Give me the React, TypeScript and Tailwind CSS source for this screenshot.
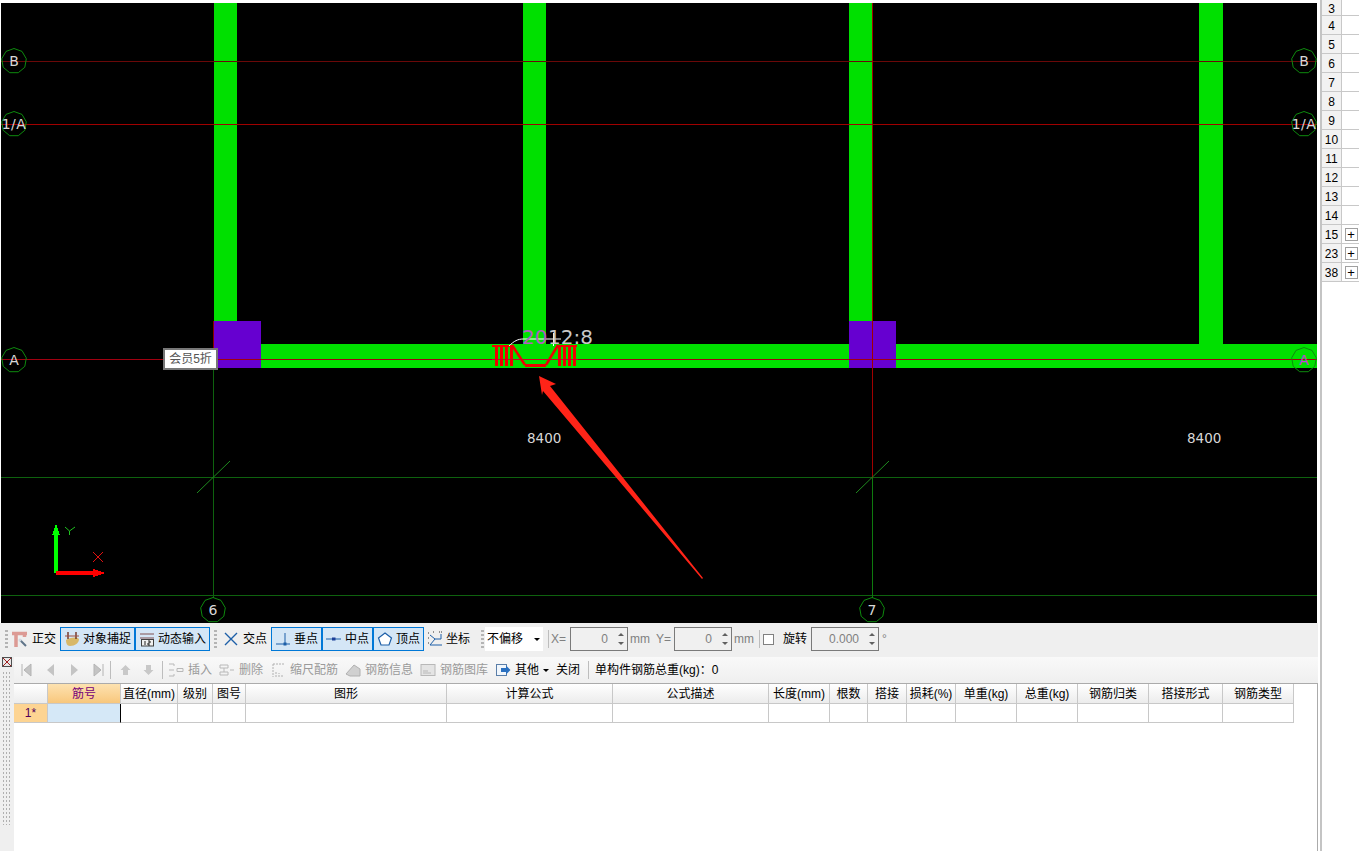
import React from 'react';

const font = '[font-family:"Liberation_Sans","Noto_Sans_CJK_SC",sans-serif]';

const columns = [
  { name: '筋号', w: 73 },
  { name: '直径(mm)', w: 57 },
  { name: '级别', w: 35 },
  { name: '图号', w: 33 },
  { name: '图形', w: 201 },
  { name: '计算公式', w: 166 },
  { name: '公式描述', w: 156 },
  { name: '长度(mm)', w: 61 },
  { name: '根数', w: 38 },
  { name: '搭接', w: 39 },
  { name: '损耗(%)', w: 49 },
  { name: '单重(kg)', w: 61 },
  { name: '总重(kg)', w: 61 },
  { name: '钢筋归类', w: 71 },
  { name: '搭接形式', w: 74 },
  { name: '钢筋类型', w: 71 },
];

const rowNumbers = ['3', '4', '5', '6', '7', '8', '9', '10', '11', '12', '13', '14', '15', '23', '38'];
const expandable = ['15', '23', '38'];

const axisMarks = [
  { x: 14, y: 61, t: 'B' },
  { x: 14, y: 124, t: '1/A' },
  { x: 14, y: 360, t: 'A' },
  { x: 1304, y: 61, t: 'B' },
  { x: 1304, y: 124, t: '1/A' },
  { x: 1304, y: 360, t: 'A', pink: true },
  { x: 213, y: 610, t: '6' },
  { x: 872, y: 610, t: '7' },
];

const octagon = (cx: number, cy: number, r: number) =>
  Array.from({ length: 9 }, (_, i) => {
    const a = (i * Math.PI * 2) / 9 - Math.PI / 2;
    return `${(cx + r * Math.cos(a)).toFixed(1)},${(cy + r * Math.sin(a)).toFixed(1)}`;
  }).join(' ');

const DrawingCanvas = () => (
  <svg viewBox="1 3 1316 620" className="block h-[620px] w-[1316px] bg-black" shapeRendering="crispEdges">
    {/* columns and beam */}
    <g fill="#00e000">
      <rect x="214" y="3" width="23" height="320" />
      <rect x="523" y="3" width="23" height="342" />
      <rect x="849" y="3" width="23" height="320" />
      <rect x="1199" y="3" width="24" height="342" />
      <rect x="261" y="344" width="1056" height="24" />
    </g>
    <rect x="213" y="321" width="48" height="47" fill="#6600d0" />
    <rect x="849" y="321" width="47" height="47" fill="#6600d0" />

    {/* axis lines */}
    <g strokeWidth="1">
      <line x1="0" y1="61.5" x2="1317" y2="61.5" stroke="#6a0808" />
      <line x1="0" y1="124.5" x2="1317" y2="124.5" stroke="#a00000" />
      <line x1="0" y1="359.5" x2="1317" y2="359.5" stroke="#a00010" />
      <line x1="0" y1="477.5" x2="1317" y2="477.5" stroke="#0e620e" />
      <line x1="0" y1="595.5" x2="1317" y2="595.5" stroke="#0e620e" />
      <line x1="213.5" y1="321" x2="213.5" y2="598" stroke="#0e620e" />
      <line x1="213.5" y1="321" x2="213.5" y2="368" stroke="#8a0000" />
      <line x1="872.5" y1="3" x2="872.5" y2="478" stroke="#a00000" />
      <line x1="872.5" y1="478" x2="872.5" y2="598" stroke="#0e7a0e" />
    </g>
    <g stroke="#1f8a1f" shapeRendering="auto">
      <line x1="197" y1="493" x2="230" y2="461" />
      <line x1="856" y1="493" x2="889" y2="461" />
    </g>

    {/* axis bubbles */}
    {axisMarks.map((m) => (
      <g key={`${m.x}-${m.y}`}>
        <polygon
          points={octagon(m.x, m.y, 12.5)}
          fill="none"
          stroke="#0e8a0e"
          shapeRendering="auto"
        />
        <text
          x={m.x}
          y={m.y + 5}
          textAnchor="middle"
          fontFamily="DejaVu Sans, sans-serif"
          fontSize="14"
          letterSpacing={m.t.length > 1 ? 0.5 : 0}
          fill={m.pink ? '#c83cdc' : '#d8d8d8'}
          shapeRendering="auto"
        >
          {m.t}
        </text>
      </g>
    ))}

    {/* rebar */}
    <g fill="#f00000">
      <rect x="492" y="345" width="20" height="2" />
      {[495, 500, 505, 510].map((x) => (
        <rect key={x} x={x} y="345" width="3" height="21" />
      ))}
      <rect x="525" y="364" width="21" height="3" />
      <rect x="557" y="345" width="20" height="2" />
      {[558, 563, 568, 573].map((x) => (
        <rect key={x} x={x} y="345" width="3" height="21" />
      ))}
    </g>
    <path d="M512 345 L525 365 M546 365 L558 345" stroke="#f00000" strokeWidth="2.5" fill="none" shapeRendering="auto" />
    <line x1="492" y1="359.5" x2="578" y2="359.5" stroke="#d00020" />
    <path d="M509 346 C514 341 518 339 523 339 L561 339" stroke="#fff" fill="none" shapeRendering="auto" />
    <path d="M553 333 V346" stroke="#fff" />
    <text x="522" y="344" fontFamily="DejaVu Sans, sans-serif" fontSize="20" fill="#b060c0" shapeRendering="auto">
      20
    </text>
    <text x="548" y="344" fontFamily="DejaVu Sans, sans-serif" fontSize="20" fill="#c8c8c8" shapeRendering="auto">
      12:8
    </text>

    {/* dimensions */}
    <g fontFamily="DejaVu Sans, sans-serif" fontSize="13.5" fill="#d8d8d8" shapeRendering="auto">
      <text x="527" y="443">8400</text>
      <text x="1187" y="443">8400</text>
    </g>

    {/* red arrow */}
    <polygon points="539,376 556,384 550,386 703,578 702,579 543,391 542,395" fill="#ff2418" shapeRendering="auto" />

    {/* ucs */}
    <rect x="54" y="534" width="4" height="39" fill="#00ff00" />
    <path d="M56 524 L60 535 H52 Z" fill="#00ff00" />
    <rect x="56" y="571" width="38" height="4" fill="#ff0000" />
    <path d="M105 573 L93 569 V577 Z" fill="#ff0000" />
    <path d="M65 527 L69.5 531 L75 527 M69.5 531 V535" stroke="#1fc01f" fill="none" shapeRendering="auto" />
    <path d="M93 552 L103 562 M103 552 L93 562" stroke="#e01010" fill="none" shapeRendering="auto" />
  </svg>
);

const Handle = () => <div className="h-[18px] w-[3px] bg-[repeating-linear-gradient(to_bottom,#b4b4b4_0,#b4b4b4_2px,transparent_2px,transparent_4px)]" />;
const Sep = () => <div className="h-[18px] w-px bg-[#bdbdbd]" />;

const SnapButton = ({ w, active, icon, label }: { w: number; active?: boolean; icon: React.ReactNode; label: string }) => (
  <div
    style={{ width: w }}
    className={`flex h-[24px] items-center justify-center gap-[3px] ${active ? 'border border-[#0078d7] bg-[#d4e6f6]' : ''}`}
  >
    {icon}
    <span>{label}</span>
  </div>
);

const Spinner = ({ value, w }: { value: string; w: number }) => (
  <div style={{ width: w }} className="flex h-[24px] items-center justify-end border border-[#7a7a7a] bg-[#f0f0f0] text-[#808080]">
    <span className="mr-[10px]">{value}</span>
    <div className="mr-[3px] flex flex-col gap-[6px]">
      <div className="h-0 w-0 border-x-[3px] border-b-[3px] border-x-transparent border-b-[#606060]" />
      <div className="h-0 w-0 border-x-[3px] border-t-[3px] border-x-transparent border-t-[#606060]" />
    </div>
  </div>
);

const Ico = ({ children, w = 16 }: { children: React.ReactNode; w?: number }) => (
  <svg width={w} height="16" viewBox={`0 0 ${w} 16`} fill="none" className="shrink-0">
    {children}
  </svg>
);

const SnapToolbar = () => (
  <div className="flex h-[34px] items-center bg-[#efefef] pb-[2px] pl-[5px] text-[12px] text-black">
    <Handle />
    <div className="ml-[4px] flex items-center gap-[4px]">
      <Ico>
        <path d="M0 2.5H15M4 2V16M12.5 2V6" stroke="#dc9a94" strokeWidth="3.5" />
        <path d="M8 9L14 15" stroke="#5f7488" strokeWidth="2" />
        <circle cx="8" cy="9" r="1.5" fill="#d0d8e0" />
      </Ico>
      <span>正交</span>
    </div>
    <div className="ml-[4px] flex">
      <SnapButton
        w={75}
        active
        label="对象捕捉"
        icon={
          <Ico>
            <path d="M2 9C5 7 12 5 15 8C15 12 11 15 6 15C3 15 2 12 2 9Z" fill="#d8b868" />
            <path d="M4 1V8M12 1V8" stroke="#703020" strokeWidth="1.4" />
            <path d="M1 5H15" stroke="#a05040" />
          </Ico>
        }
      />
      <SnapButton
        w={75}
        active
        label="动态输入"
        icon={
          <Ico>
            <path d="M1 3H15M1 7H15" stroke="#805050" />
            <rect x="2.5" y="8.5" width="12" height="6.5" fill="#f0f0f0" stroke="#404040" />
            <path d="M6 10V14M9 10H11V12H9V14H11" stroke="#202020" />
          </Ico>
        }
      />
    </div>
    <div className="ml-[4px]">
      <Handle />
    </div>
    <div className="ml-[6px] flex items-center gap-[4px]">
      <Ico>
        <path d="M2 2L14 14M14 2L2 14" stroke="#1d5fa8" strokeWidth="1.4" />
      </Ico>
      <span>交点</span>
    </div>
    <div className="ml-[4px] flex">
      <SnapButton
        w={51}
        active
        label="垂点"
        icon={
          <Ico>
            <path d="M10 2V13M1 13H15" stroke="#1d5fa8" />
            <rect x="8.5" y="11.5" width="3" height="3" fill="#1d5fa8" />
          </Ico>
        }
      />
      <SnapButton
        w={51}
        active
        label="中点"
        icon={
          <Ico>
            <path d="M0 8H15" stroke="#1d5fa8" />
            <rect x="6" y="6.5" width="3.5" height="3" fill="#1d3f98" />
          </Ico>
        }
      />
      <SnapButton
        w={51}
        active
        label="顶点"
        icon={
          <Ico>
            <path d="M8 2L14.5 7L12 14H4L1.5 7Z" stroke="#1d5fa8" strokeWidth="1.2" fill="#ffffff" />
          </Ico>
        }
      />
    </div>
    <div className="ml-[3px] flex items-center gap-[3px]">
      <Ico>
        <path d="M3 14H15M3 14L8 8L3 4M8 8L14 8L14 3" stroke="#1d5fa8" />
        <path d="M1 2H3M1 7H2M1 12H2M12 1H15M6 1H8" stroke="#303030" strokeDasharray="1 1" />
      </Ico>
      <span>坐标</span>
    </div>
    <div className="ml-[11px]">
      <Handle />
    </div>
    <div className="ml-[1px] flex h-[24px] w-[58px] items-center justify-between bg-white pl-[2px] pr-[3px]">
      <span>不偏移</span>
      <div className="h-0 w-0 border-x-[3px] border-t-[3px] border-x-transparent border-t-black" />
    </div>
    <div className="ml-[5px]">
      <Sep />
    </div>
    <span className="ml-[2px] w-[19px] text-[#808080]">X=</span>
    <Spinner value="0" w={58} />
    <span className="ml-[2px] w-[26px] text-[#808080]">mm</span>
    <span className="w-[18px] text-[#808080]">Y=</span>
    <Spinner value="0" w={58} />
    <span className="ml-[2px] w-[25px] text-[#808080]">mm</span>
    <Sep />
    <div className="ml-[3px] h-[11px] w-[11px] border border-[#808080] bg-white" />
    <span className="ml-[9px] w-[28px]">旋转</span>
    <Spinner value="0.000" w={68} />
    <span className="ml-[3px] text-[#808080]">°</span>
  </div>
);

const GridToolbar = () => (
  <div className="flex h-[26px] items-center bg-gradient-to-b from-[#f9f9f9] to-[#efefef] pl-[7px] text-[12px] text-[#9a9a9a]">
    <div className="flex w-[85px] items-center justify-between pr-[2px]">
      <Ico w={11}>
        <path d="M1 2V14M10 2L3 8L10 14Z" fill="#c4c4c4" stroke="#b4b4b4" />
      </Ico>
      <Ico w={9}>
        <path d="M8 2L1 8L8 14Z" fill="#c4c4c4" />
      </Ico>
      <Ico w={9}>
        <path d="M1 2L8 8L1 14Z" fill="#c4c4c4" />
      </Ico>
      <Ico w={11}>
        <path d="M10 2V14M1 2L8 8L1 14Z" fill="#c4c4c4" stroke="#b4b4b4" />
      </Ico>
    </div>
    <div className="ml-[4px]">
      <Sep />
    </div>
    <div className="ml-[9px] flex w-[42px] justify-between pr-[8px]">
      <Ico w={11}>
        <path d="M5.5 3L10.5 8H8V13H3V8H0.5Z" fill="#c8c8c8" />
      </Ico>
      <Ico w={11}>
        <path d="M5.5 13L10.5 8H8V3H3V8H0.5Z" fill="#c8c8c8" />
      </Ico>
    </div>
    <Sep />
    <div className="ml-[5px] flex items-center gap-[4px]">
      <Ico>
        <path d="M1 2H6V4M1 14H6V12M1 8H6M9 6.5H15V9.5H9Z" stroke="#b8b8b8" />
      </Ico>
      <span>插入</span>
    </div>
    <div className="ml-[7px] flex items-center gap-[4px]">
      <Ico>
        <path d="M1 3H9V6H1ZM1 10H9V13H1ZM5 6V10M11 8H15" stroke="#b8b8b8" />
      </Ico>
      <span>删除</span>
    </div>
    <div className="ml-[9px] flex items-center gap-[4px]">
      <Ico w={14}>
        <path d="M1 2H13M1 2V15M4 15V9M7 15V11M10 15V13" stroke="#b0b0b0" strokeDasharray="2 1" />
      </Ico>
      <span>缩尺配筋</span>
    </div>
    <div className="ml-[7px] flex items-center gap-[4px]">
      <Ico>
        <path d="M1 12L9 3L15 7V14H5Z" fill="#d0d0d0" stroke="#b0b0b0" />
      </Ico>
      <span>钢筋信息</span>
    </div>
    <div className="ml-[7px] flex items-center gap-[4px]">
      <Ico>
        <rect x="1" y="2.5" width="14" height="11" fill="#e4e4e4" stroke="#b8b8b8" />
        <path d="M3 9H8M3 11H11" stroke="#b8b8b8" />
      </Ico>
      <span>钢筋图库</span>
    </div>
    <div className="ml-[7px] flex items-center gap-[4px] text-black">
      <Ico>
        <rect x="1.5" y="2.5" width="10" height="11" fill="#f0f6fc" stroke="#5a7ea8" />
        <path d="M6 6H11V3.5L15.5 8L11 12.5V10H6Z" fill="#2a70c0" />
      </Ico>
      <span>其他</span>
      <div className="h-0 w-0 border-x-[3px] border-t-[3px] border-x-transparent border-t-black" />
    </div>
    <span className="ml-[7px] text-black">关闭</span>
    <div className="ml-[8px]">
      <Sep />
    </div>
    <span className="ml-[6px] text-black">单构件钢筋总重(kg)：0</span>
  </div>
);

const DataGrid = () => (
  <div className="h-[168px] border-r border-t border-[#ababab] bg-white text-[12px]">
    <div className="flex">
      <div className="h-[20px] w-[34px] border-b border-r border-[#c8c8c8] bg-gradient-to-b from-white to-[#ececec]" />
      {columns.map((c, i) => (
        <div
          key={c.name}
          style={{ width: c.w }}
          className={`flex h-[20px] items-center justify-center border-b border-r border-[#c8c8c8] ${
            i === 0 ? 'bg-gradient-to-b from-[#fde2b0] to-[#f8c77c] text-[#76007a]' : 'bg-gradient-to-b from-white to-[#ececec] text-black'
          }`}
        >
          {c.name}
        </div>
      ))}
    </div>
    <div className="flex">
      <div className="flex h-[19px] w-[34px] items-center justify-center border-b border-r border-[#c8c8c8] bg-[#fdd492] text-[#50005a]">
        1*
      </div>
      {columns.map((c, i) => (
        <div
          key={c.name}
          style={{ width: c.w }}
          className={`h-[19px] border-b border-[#c8c8c8] ${i === 0 ? 'border-r border-r-black bg-[#d5e8f7]' : 'border-r'}`}
        />
      ))}
    </div>
  </div>
);

const RowPanel = () => (
  <div className="ml-[2px] w-[39px] border-l-2 border-[#c4c4c4] text-[12px] text-black">
    {rowNumbers.map((n) => (
      <div key={n} className="flex h-[19px] first:h-[16px]">
        <div className="flex w-[20px] items-center justify-center border-b border-r border-[#c8c8c8] bg-[#f2f2f2] pt-[2px]">{n}</div>
        <div className="flex w-[17px] items-center justify-center border-b border-[#c8c8c8] pl-[1px]">
          {expandable.includes(n) && (
            <div className="flex h-[13px] w-[13px] items-center justify-center border border-[#a0a0a0] text-[13px] leading-none">+</div>
          )}
        </div>
      </div>
    ))}
  </div>
);

const App = () => {
  return (
    <div className={`flex h-[851px] w-[1359px] overflow-hidden bg-white ${font}`}>
      <div className="w-[1318px] pt-[3px]">
        <div className="relative ml-px">
          <DrawingCanvas />
          <div className="absolute left-[162px] top-[345px] flex h-[22px] w-[55px] items-center justify-center border-2 border-[#777] bg-white text-[12px] text-[#555]">
            会员5折
          </div>
        </div>
        <SnapToolbar />
        <div className="flex">
          <div className="relative w-[14px] bg-[#efefef]">
            <div className="absolute left-[2px] top-[14px] h-[154px] w-[9px] bg-[radial-gradient(#b0b0b0_1px,transparent_1px)] bg-[length:3px_4px]" />
            <div className="absolute left-[2px] top-0 h-[10px] w-[10px] border border-[#505050] bg-[#e8e8e8] text-[0px]">
              <svg viewBox="0 0 8 8" className="h-full w-full">
                <path d="M0 0L8 8M8 0L0 8" stroke="#a02020" />
              </svg>
            </div>
          </div>
          <div className="flex-1">
            <GridToolbar />
            <DataGrid />
          </div>
        </div>
      </div>
      <RowPanel />
    </div>
  );
};

export default App;
